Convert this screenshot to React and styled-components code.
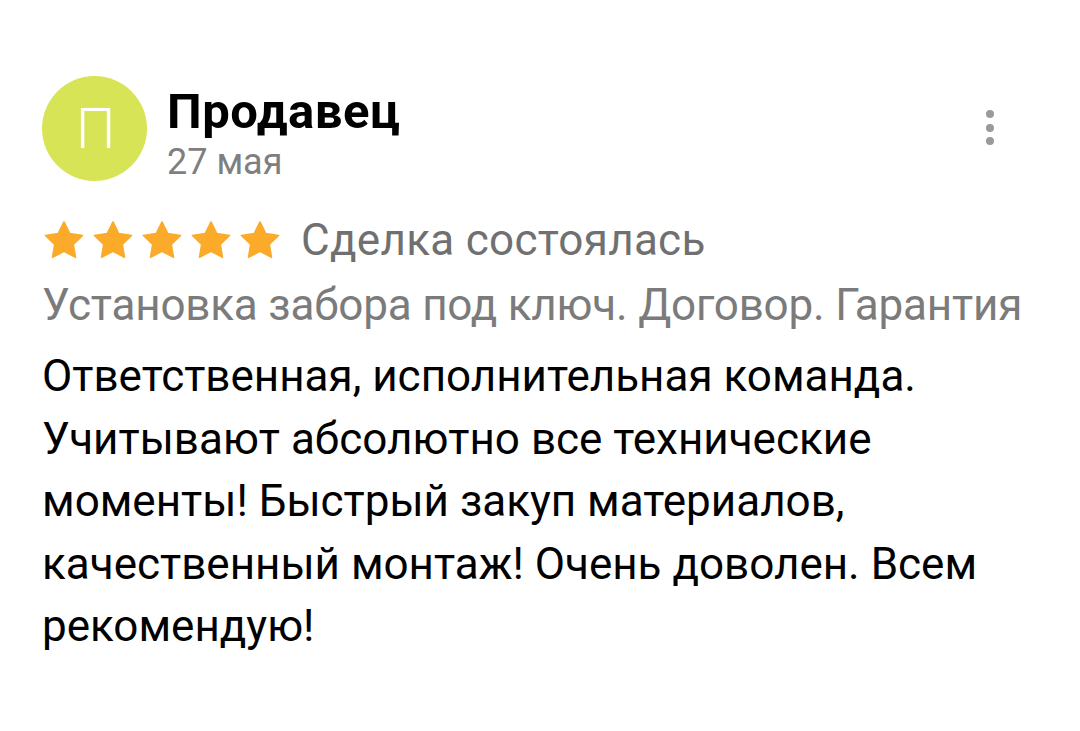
import React from 'react';
import styled, { createGlobalStyle } from 'styled-components';

const GlobalStyle = createGlobalStyle`
  body {
    margin: 0;
    background: #ffffff;
    font-family: Roboto, "Liberation Sans", sans-serif;
  }
`;

const Card = styled.div`
  display: flex;
  flex-direction: column;
  width: 1080px;
  box-sizing: border-box;
  padding: 76px 40px 0 42px;
`;

const Header = styled.header`
  display: flex;
  align-items: flex-start;
  justify-content: space-between;
`;

const Author = styled.div`
  display: flex;
  align-items: flex-start;
  gap: 20px;
`;

const Avatar = styled.div`
  width: 105px;
  height: 105px;
  border-radius: 50%;
  background: #d7e456;
  color: #ffffff;
  display: flex;
  align-items: center;
  justify-content: center;
  font-size: 56px;
  font-weight: 300;
  padding-left: 2px;
  box-sizing: border-box;
`;

const AuthorInfo = styled.div`
  display: flex;
  flex-direction: column;
  padding-top: 6px;
`;

const Name = styled.h3`
  margin: 0;
  font-size: 49px;
  font-weight: 700;
  line-height: 59px;
  letter-spacing: 0.5px;
  color: #000000;
`;

const DateText = styled.span`
  font-size: 36px;
  line-height: 42px;
  color: #7f7f7f;
`;

const MoreButton = styled.button`
  display: flex;
  flex-direction: column;
  gap: 5.5px;
  padding: 0;
  margin: 34px 46px 0 0;
  border: none;
  background: none;
  cursor: pointer;
`;

const Dot = styled.span`
  width: 8px;
  height: 8px;
  border-radius: 50%;
  background: #9a9a9a;
`;

const RatingRow = styled.div`
  display: flex;
  align-items: center;
  margin-top: 26px;
  gap: 21px;
`;

const Stars = styled.div`
  display: flex;
  gap: 9px;
  margin-left: 2px;
`;

const Status = styled.span`
  font-size: 44px;
  line-height: 62px;
  color: #707070;
  letter-spacing: 0.3px;
`;

const Title = styled.div`
  margin-top: 3px;
  font-size: 44px;
  line-height: 62px;
  color: #7b7b7b;
  letter-spacing: -0.2px;
`;

const Body = styled.p`
  margin: 9px 0 0;
  font-size: 44px;
  line-height: 62.5px;
  color: #000000;
`;

function Star() {
  return (
    <svg width="40" height="38" viewBox="-0.3 0 24.6 23.4">
      <path
        d="M12 0.6L15.53 7.75 23.41 8.89 17.71 14.45 19.05 22.31 12 18.6 4.95 22.31 6.29 14.45 0.59 8.89 8.47 7.75Z"
        fill="#fbab29"
        stroke="#fbab29"
        strokeWidth="1"
        strokeLinejoin="round"
      />
    </svg>
  );
}

export default function App() {
  return (
    <>
      <GlobalStyle />
      <Card>
        <Header>
          <Author>
            <Avatar>П</Avatar>
            <AuthorInfo>
              <Name>Продавец</Name>
              <DateText>27 мая</DateText>
            </AuthorInfo>
          </Author>
          <MoreButton aria-label="Ещё">
            <Dot />
            <Dot />
            <Dot />
          </MoreButton>
        </Header>
        <RatingRow>
          <Stars>
            {[0, 1, 2, 3, 4].map(i => <Star key={i} />)}
          </Stars>
          <Status>Сделка состоялась</Status>
        </RatingRow>
        <Title>Установка забора под ключ. Договор. Гарантия</Title>
        <Body>
          Ответственная, исполнительная команда.<br />
          Учитывают абсолютно все технические<br />
          моменты! Быстрый закуп материалов,<br />
          качественный монтаж! Очень доволен. Всем<br />
          рекомендую!
        </Body>
      </Card>
    </>
  );
}
